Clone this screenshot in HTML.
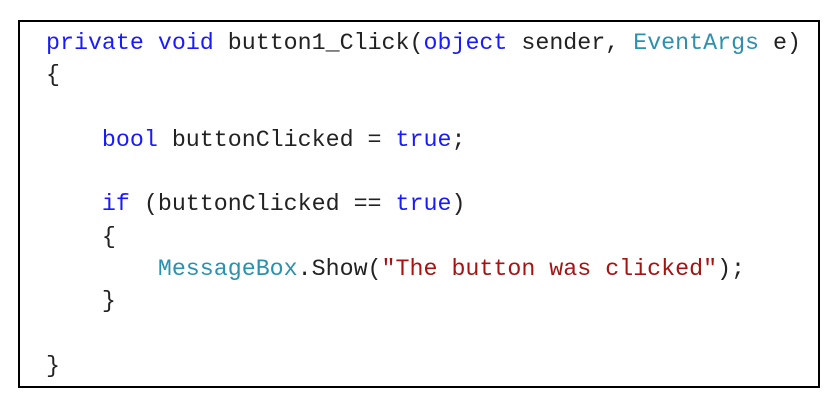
<!DOCTYPE html>
<html><head><style>
html,body{margin:0;padding:0;background:#fff;width:837px;height:401px;overflow:hidden}
.box{position:absolute;left:18px;top:20px;width:798px;height:364px;border:2px solid #000}
pre{position:absolute;left:46px;top:27px;margin:0;font-family:"Liberation Mono",monospace;font-size:23.3px;line-height:32.3px;color:#222}
.k{color:#1a1aff}.t{color:#2b91af}.s{color:#a31515}
</style></head><body>
<div class="box"></div>
<pre><span class="k">private</span> <span class="k">void</span> button1_Click(<span class="k">object</span> sender, <span class="t">EventArgs</span> e)
{

    <span class="k">bool</span> buttonClicked = <span class="k">true</span>;

    <span class="k">if</span> (buttonClicked == <span class="k">true</span>)
    {
        <span class="t">MessageBox</span>.Show(<span class="s">"The button was clicked"</span>);
    }

}</pre>
</body></html>
